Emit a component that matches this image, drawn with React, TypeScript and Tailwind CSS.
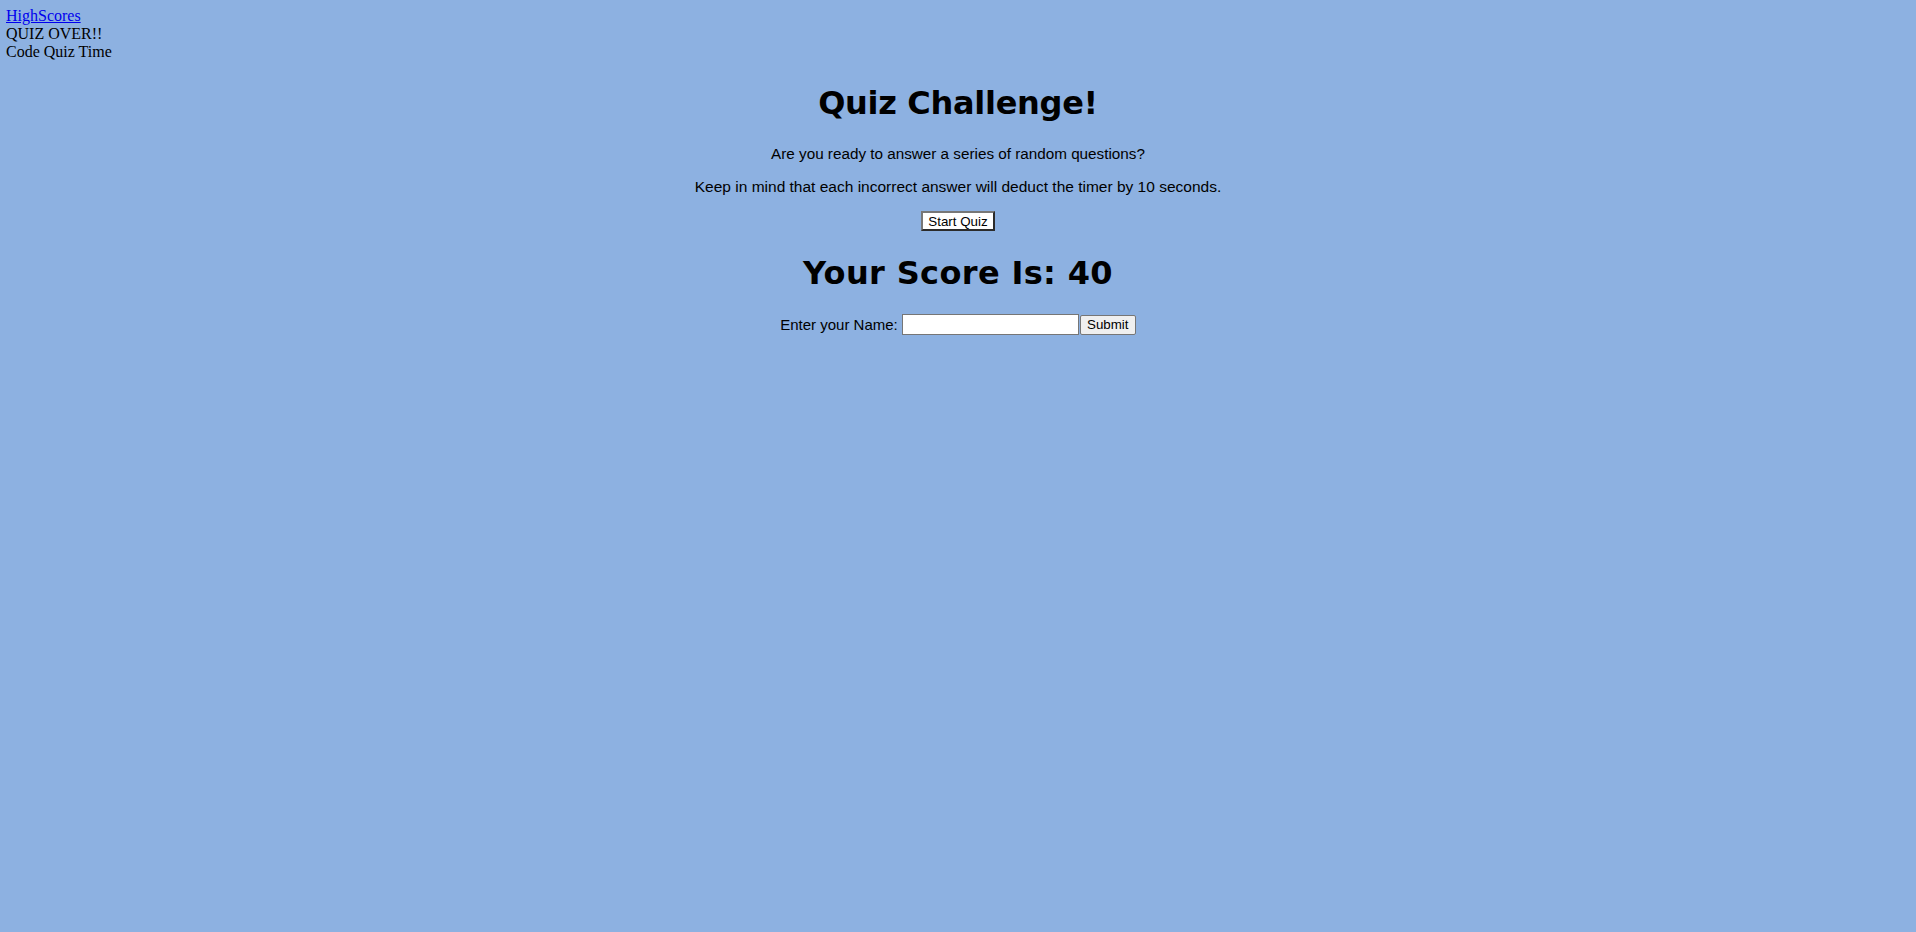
function App() {
  return (
    <div className="min-h-screen w-full bg-[#8db1e1] text-black leading-[normal]">
      <header className="pl-[6px] pt-[7px] font-['Liberation_Serif',serif] text-[16px]">
        <a href="#" className="text-[#0000ee] underline">
          HighScores
        </a>
        <div>QUIZ OVER!!</div>
        <div>Code Quiz Time</div>
      </header>

      <main className="flex flex-col items-center font-['Liberation_Sans',Arial,sans-serif]">
        <h1 className="mt-[23px] font-['DejaVu_Sans',Verdana,sans-serif] text-[32px] font-bold tracking-[-0.3px]">
          Quiz Challenge!
        </h1>
        <p className="mt-[23px] text-[15.25px]">
          Are you ready to answer a series of random questions?
        </p>
        <p className="mt-[16px] text-[15.5px]">
          Keep in mind that each incorrect answer will deduct the timer by 10 seconds.
        </p>
        <button className="mt-[15px] h-[20px] w-[74px] border-2 border-t-[#777] border-l-[#777] border-b-[#2b2b2b] border-r-[#2b2b2b] bg-white text-[13.33px]">
          Start Quiz
        </button>
        <h1 className="mt-[23px] font-['DejaVu_Sans',Verdana,sans-serif] text-[32px] font-bold tracking-[0.35px]">
          Your Score Is: 40
        </h1>
        <form className="mt-[22px] flex items-center" onSubmit={(e) => e.preventDefault()}>
          <label htmlFor="name" className="mr-[4px] text-[15px]">
            Enter your Name:
          </label>
          <input
            id="name"
            type="text"
            className="h-[21px] w-[177px] border border-[#767676] bg-white px-[2px] text-[13.33px]"
          />
          <button
            type="submit"
            className="ml-[1px] h-[20px] w-[56px] rounded-[2px] border border-[#767676] bg-[#efefef] text-[13.33px]"
          >
            Submit
          </button>
        </form>
      </main>
    </div>
  );
}

export default App;
